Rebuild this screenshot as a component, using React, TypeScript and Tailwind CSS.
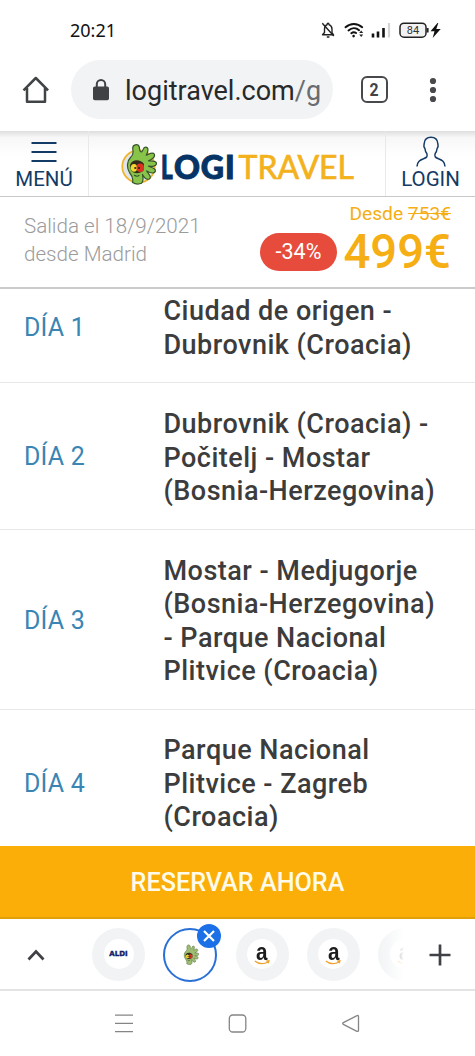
import React from 'react';

const days = [
  { day: 'DÍA 1', lines: ['Ciudad de origen -', 'Dubrovnik (Croacia)'], box: 'h-[94px] pt-[6px] pb-[20px]' },
  { day: 'DÍA 2', lines: ['Dubrovnik (Croacia) -', 'Počitelj - Mostar', '(Bosnia-Herzegovina)'], box: 'h-[146.5px] pt-[25px] pb-[20px]' },
  { day: 'DÍA 3', lines: ['Mostar - Medjugorje', '(Bosnia-Herzegovina)', '- Parque Nacional', 'Plitvice (Croacia)'], box: 'h-[180px] pt-[25px] pb-[20px]' },
  { day: 'DÍA 4', lines: ['Parque Nacional', 'Plitvice - Zagreb', '(Croacia)'], box: 'h-[146px] pt-[25px] pb-[20px]' },
];

function Creature({ className, ring = false }: { className: string; ring?: boolean }) {
  return (
    <svg viewBox="0 0 36 42" className={className} fill="none">
      {ring && <circle cx="17.500" cy="23.500" r="16.200" fill="#dfe5ea" stroke="#f0b32c" strokeWidth="1.800" />}
      <path
        d="M11.500 39.500C12.500 35.500 11 32.500 8.500 29.500C5.500 25 5.800 18 9.500 14.500C12.300 12.300 12.500 10 11.800 6.500C11 1 17.300.3 18.400 4.300C18.800 6.800 18.300 8.800 20.500 9C22.300 8.300 21.700 4.200 24.600 4.200C28 4.200 27.300 8.800 25.200 12.300C28 11.200 31.600 8.600 33.200 11C34.700 14 31 16.400 27.500 17.800C31 18 35.500 17.300 35.500 20.500C35.400 23.600 31 23.400 27.500 23.200C31.500 24.800 35.300 25.800 34.200 28.600C32.800 31.200 29 29.800 25.600 28C28 31.200 30.900 34.300 28.200 36C25.400 37.500 22.800 33.800 21.500 31.500C22 34.500 23 38.500 20.500 40.300C17.500 41.500 14 41 11.500 39.500Z"
        fill={ring ? '#88c34a' : '#9fbd72'} stroke={ring ? '#36552c' : '#5d7a48'} strokeWidth="1.200" strokeLinejoin="round"
      />
      <path d="M9 22c1.500-5.500 10-6.500 14-1l-.5 6.500c-3.800 3.500-9.500 3.500-12.500 0z" fill="#332b1c" />
      <ellipse cx="13" cy="24.800" rx="3.200" ry="3.900" fill="#f2d82e" />
      <ellipse cx="19.200" cy="24.800" rx="3.800" ry="4.200" fill="#dc3424" />
      <circle cx="14.200" cy="25" r="1" fill="#222" />
      <circle cx="18" cy="25" r="1" fill="#222" />
      <path d="M13.500 32.300c1.500 1.300 3.500 1.200 4.500 0" stroke="#36552c" strokeWidth="1.200" strokeLinecap="round" />
    </svg>
  );
}

function Amazon() {
  return (
    <div className="flex size-[53px] shrink-0 items-center justify-center rounded-full bg-[#f1f3f4]">
      <div className="flex size-[30px] flex-col items-center rounded-full bg-white pt-[3px]">
        <span className="h-[19px] scale-x-[0.86] font-['Liberation_Sans',sans-serif] text-[24px] leading-[19px] font-bold text-[#1c1c1c]">a</span>
        <svg viewBox="0 0 16 5" className="-mt-px h-[5px] w-4" fill="none">
          <path d="M.8 1C5 4.600 10.500 4.300 14.200 1.700M12 1l3-.3-.8 2.600" stroke="#f0a02c" strokeWidth="1.200" />
        </svg>
      </div>
    </div>
  );
}

function StatusBar() {
  return (
    <div className="flex h-[60px] shrink-0 items-center pl-[70px]">
      <span className="w-[250px] font-['Noto_Sans',sans-serif] text-[18px] leading-6 text-[#111]">20:21</span>
      <svg viewBox="0 0 124 20" className="h-5 w-[124px]" fill="none">
        <g stroke="#222" strokeWidth="1.400">
          <path d="M4.500 12.500V9.200c0-2.200 1-3.800 2.600-4.500 0-2 1.900-2 1.900 0 2 .7 3 2.300 3 4.500v3.500l1.500 2.100H2.500z" strokeLinejoin="round" />
          <path d="M2.300 3.300 13.800 16M6.800 17h2.600" />
        </g>
        <g stroke="#111" strokeWidth="2" strokeLinecap="round">
          <path d="M25.500 7.200c5-4.400 11.700-4.400 16.700 0M28.500 10.400c3.300-2.900 7.600-2.900 10.600-.2M31.300 13.200c1.600-1.300 3.300-1.300 4.800-.2" />
        </g>
        <circle cx="33.600" cy="16.100" r="1.300" fill="#111" />
        <path d="m39.200 13 2-2.500 2 2.500zM39.200 14.500l2 2.500 2-2.500z" fill="#222" />
        <path d="M53 13.500v4M58 11.500v6M63.500 8v9.500" stroke="#111" strokeWidth="2.600" />
        <path d="M69 3v14.500" stroke="#d4d4d4" strokeWidth="2.200" />
        <rect x="80" y="3.200" width="26" height="14" rx="4" fill="#f2f2f2" stroke="#222" strokeWidth="1.500" />
        <path d="M107.600 8v4.500" stroke="#222" strokeWidth="2" />
        <text x="93" y="14" textAnchor="middle" fontSize="11" fill="#333" fontFamily="Roboto, sans-serif">84</text>
        <path d="m117.500 3-7 8.300h4l-1.800 6.700 8-9h-4.400l2-6z" fill="#111" />
      </svg>
    </div>
  );
}

export default function App() {
  return (
    <div className="flex h-[1056px] w-[475px] flex-col overflow-hidden bg-white font-[Roboto,sans-serif]">
      <StatusBar />
      <div className="flex h-[71px] shrink-0 items-start pl-[22px]">
        <svg viewBox="0 0 28 28" className="mt-[16px] mr-[21px] h-7 w-7 shrink-0" fill="none" stroke="#414446" strokeWidth="2.500">
          <path d="M1.500 14.300 13.800 2l12.300 12.300M5 12v13.800h18V12" strokeLinejoin="round" />
        </svg>
        <div className="flex h-[59px] w-[262px] shrink-0 items-center rounded-full bg-[#f1f3f4] pl-[22px]">
          <svg viewBox="0 0 16 22" className="mr-[16px] h-[22px] w-4 shrink-0" fill="none">
            <rect y="7.500" width="16" height="13.800" rx="1.800" fill="#3f4144" />
            <path d="M3.800 8V5.200a4.200 4.200 0 0 1 8.400 0V8" stroke="#3f4144" strokeWidth="2" />
          </svg>
          <span className="pt-[3px] text-[27px] leading-8 whitespace-nowrap text-[#27292b]">logitravel.com<span className="text-[#696c70]">/g</span></span>
        </div>
        <div className="mt-[16px] ml-[28px] flex size-[27px] shrink-0 items-center justify-center rounded-[6px] border-[2.500px] border-[#47494c] text-[18px] leading-none font-bold text-[#414347]"><span className="scale-x-[0.88]">2</span></div>
        <svg viewBox="0 0 8 26" className="mt-[17px] ml-[41px] h-[26px] w-2" fill="#47494c">
          <circle cx="4" cy="4" r="3.100" /><circle cx="4" cy="13" r="3.100" /><circle cx="4" cy="22" r="3.100" />
        </svg>
      </div>

      <header className="flex h-[66px] shrink-0 border-b-[1.500px] border-[#c9c9c9] bg-linear-to-b from-[#dedede] via-[#f7f7f7] via-10% to-white to-40% text-[#143a66]">
        <div className="flex w-[89px] shrink-0 flex-col items-center border-r border-[#e9e9e9] pt-[10px]">
          <svg viewBox="0 0 26 21" className="h-[21px] w-[26px]"><path d="M.5 2h25M.5 11h25M.5 20h25" stroke="#143a66" strokeWidth="1.900" /></svg>
          <span className="mt-[5px] text-[20.500px] leading-6">MENÚ</span>
        </div>
        <div className="flex w-[297px] shrink-0 border-r border-[#e9e9e9] pl-[32px]">
          <Creature className="mt-[12px] h-[42px] w-9 shrink-0" ring />
          <div className="mt-[17px] ml-[4px] flex text-[32px] leading-[38px] whitespace-nowrap">
            <b className="w-[77.500px] shrink-0 font-[Lato,sans-serif] font-black tracking-[0.900px] text-[#063466] [-webkit-text-stroke:1px_#063466]"><span className="inline-block w-[13px] origin-left scale-x-[0.700]">L</span>OGI</b>
            <span className="origin-left font-[Lato,sans-serif] text-[#f3b21d] [-webkit-text-stroke:0.700px_#f3b21d]">TRAVEL</span>
          </div>
        </div>
        <div className="flex grow flex-col items-center pt-[5px]">
          <svg viewBox="0 0 30 32" className="h-8 w-[30px]" fill="none" stroke="#143a66" strokeWidth="1.500">
            <path d="M1 30.500c.3-5 3-6.300 6.500-7.700 3.500-1.500 4.300-2.300 3.300-5.300-1.500-1.600-1.700-3.300-1.900-5-2-2.500-.7-3.500-.7-5C8.500 3.500 11 1.300 15 1.300s6.500 2.200 6.800 6.200c0 1.500 1.300 2.500-.7 5-.2 1.700-.4 3.400-1.900 5-1 3-.2 3.800 3.300 5.300 3.500 1.400 6.200 2.700 6.500 7.700" />
          </svg>
          <span className="mt-[-1px] text-[20.500px] leading-6">LOGIN</span>
        </div>
      </header>

      <section className="flex h-[92px] shrink-0 justify-between border-b-2 border-[#cbcbcb] pr-[24px] pl-[24px]">
        <div className="pt-[14.500px] text-[20.600px] leading-[28px] font-light text-[#9b9b9b]">
          <p>Salida el 18/9/2021</p>
          <p>desde Madrid</p>
        </div>
        <div className="flex flex-col items-end text-[#f5ae14]">
          <p className="pt-[5px] text-[19.200px] leading-6">Desde <s>753€</s></p>
          <div className="flex items-center">
            <span className="mr-[6px] flex h-[38px] w-[77px] items-center justify-center rounded-full bg-[#e64b3c] pr-[1px] text-[21.500px] text-white">-34%</span>
            <span className="text-[47.300px] leading-[52px] font-medium">499€</span>
          </div>
        </div>
      </section>

      <main className="h-[557px] shrink-0 overflow-hidden">
        {days.map(({ day, lines, box }) => (
          <div key={day} className={`flex items-center border-b-[1.500px] border-[#e7e7e7] pl-[24px] ${box}`}>
            <span className="w-[139.500px] shrink-0 pb-[2px] text-[25px] leading-8 tracking-[0.200px] text-[#3985b4]">{day}</span>
            <h2 className="text-[27px] leading-[33.500px] font-medium tracking-[0.480px] whitespace-nowrap text-[#3c3c3c]">
              {lines.map((line) => <span className="block" key={line}>{line}</span>)}
            </h2>
          </div>
        ))}
      </main>

      <button className="h-[73px] shrink-0 border-b-2 border-[#e0a00b] bg-[#fbae08] pt-[2px] text-[25.200px] font-medium text-[#fffbe8]">RESERVAR AHORA</button>

      <div className="flex h-[72px] shrink-0 items-center border-b-2 border-[#e4e4e4] pt-px pl-[27px]">
        <svg viewBox="0 0 18 12" className="mr-[47px] h-3 w-[18px] shrink-0" fill="none" stroke="#3f4144" strokeWidth="2.700"><path d="m1.500 10.500 7.500-8 7.500 8" /></svg>
        <div className="flex w-[313px] shrink-0 gap-[18.300px] overflow-hidden py-[8px] [mask-image:linear-gradient(to_right,black_285px,transparent_312px)]">
          <div className="flex size-[53px] shrink-0 items-center justify-center rounded-full bg-[#f1f3f4]">
            <div className="flex size-[30px] items-center justify-center rounded-full bg-white"><span className="font-['DejaVu_Sans',sans-serif] text-[7px] leading-[8px] font-bold text-[#111b68] [-webkit-text-stroke:0.400px_#111b68]">ALDI</span></div>
          </div>
          <div className="relative flex size-[54px] shrink-0 items-center justify-center rounded-full border-[2.500px] border-[#2970d6]">
            <Creature className="h-[21px] w-[18px]" />
            <span className="absolute -top-[6px] -right-[6px] flex size-6 items-center justify-center rounded-full bg-[#1b70e8]">
              <svg viewBox="0 0 12 12" className="size-3" stroke="white" strokeWidth="2.200"><path d="m1 1 10 10M11 1 1 11" /></svg>
            </span>
          </div>
          <Amazon /><Amazon /><Amazon />
        </div>
        <svg viewBox="0 0 22 22" className="ml-[24px] size-[22px]" stroke="#3f4144" strokeWidth="2.700"><path d="M11 .5v21M.5 11h21" /></svg>
      </div>

      <nav className="flex h-[65px] items-center pl-[114px]" aria-label="Navegación">
        <svg viewBox="0 0 20 20" className="size-5" stroke="#858585" strokeWidth="1.300"><path d="M1 1.200h18M1 9.400h18M1 17.700h18" /></svg>
        <svg viewBox="0 0 20 20" className="ml-[94px] size-5" fill="none" stroke="#858585" strokeWidth="1.300"><rect x="1.300" y="1" width="16.500" height="17" rx="3.500" /></svg>
        <svg viewBox="0 0 20 20" className="ml-[93px] size-5" fill="none" stroke="#858585" strokeWidth="1.300" strokeLinejoin="round"><path d="M17.500 2.500v14c0 .8-.8 1.200-1.500.8L2.300 10.300c-.8-.4-.8-1.200 0-1.600L16 1.600c.7-.4 1.500.1 1.500.9z" /></svg>
      </nav>
    </div>
  );
}
